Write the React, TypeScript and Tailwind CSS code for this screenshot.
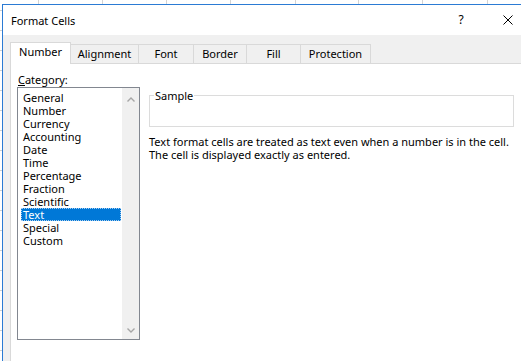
import React from "react";

const items = [
  "General",
  "Number",
  "Currency",
  "Accounting",
  "Date",
  "Time",
  "Percentage",
  "Fraction",
  "Scientific",
  "Text",
  "Special",
  "Custom",
];

const tabs = [
  { label: "Number", w: "w-[61px]", active: true },
  { label: "Alignment", w: "w-[69px]", active: false },
  { label: "Font", w: "w-[56px]", active: false },
  { label: "Border", w: "w-[54px]", active: false },
  { label: "Fill", w: "w-[55px]", active: false },
  { label: "Protection", w: "w-[71px]", active: false },
];

const gridCols = ["w-[39px]", "w-[64px]", "w-[64px]", "w-[64px]", "w-[65px]", "w-[63px]", "w-[64px]", "w-[65px]"];

export default function App() {
  return (
    <div
      className="w-[521px] h-[361px] overflow-hidden flex flex-col bg-white text-black text-[11px]"
      style={{ fontFamily: '"Noto Sans", "DejaVu Sans", sans-serif' }}
    >
      {/* spreadsheet grid peeking above */}
      <div className="h-[4px] flex shrink-0">
        {gridCols.map((c, i) => (
          <div key={i} className={`${c} h-full border-r border-[#d4d4d4] shrink-0`} />
        ))}
      </div>
      <div className="flex-1 flex min-h-0">
        <div className="w-[2px] shrink-0 bg-[repeating-linear-gradient(to_bottom,#ffffff_0px,#ffffff_6px,#d0d0d0_6px,#d0d0d0_7px,#ffffff_7px,#ffffff_20px)]" />
        <div className="flex-1 flex flex-col border-l border-t border-[#2b7bd4] min-w-0">
          {/* title bar */}
          <div className="h-[30px] shrink-0 bg-white flex items-center">
            <span className="pl-[8px] text-[11px] leading-[15px]">Format Cells</span>
            <div className="ml-auto flex items-center h-full">
              <div className="w-[46px] h-full flex items-center justify-center text-[12px]">?</div>
              <div className="w-[37px] h-full flex items-center pl-[19px]">
                <svg width="10" height="10" viewBox="0 0 10 10">
                  <path d="M0.5 0.5 L9.5 9.5 M9.5 0.5 L0.5 9.5" stroke="#000" strokeWidth="1" fill="none" />
                </svg>
              </div>
            </div>
          </div>
          {/* body */}
          <div className="flex-1 bg-[#f0f0f0] flex flex-col pl-[7px] pt-[7px] min-h-0">
            <div className="h-[21px] flex items-end shrink-0">
              {tabs.map((t, i) =>
                t.active ? (
                  <div
                    key={t.label}
                    className={`${t.w} h-[22px] -mb-px relative z-10 bg-white border border-b-0 border-[#d9d9d9] flex items-center justify-center pb-[2px] shrink-0`}
                  >
                    {t.label}
                  </div>
                ) : (
                  <div
                    key={t.label}
                    className={`${t.w} h-[19px] ${i > 0 ? "-ml-px" : ""} border border-b-0 border-[#d9d9d9] bg-[#f0f0f0] flex items-center justify-center shrink-0`}
                  >
                    {t.label}
                  </div>
                )
              )}
            </div>
            <div className="flex-1 bg-white border-t border-l border-[#d9d9d9] flex pl-[6px] pt-[8px] min-h-0">
              {/* category column */}
              <div className="flex flex-col shrink-0">
                <div className="ml-[1px] leading-[15px] h-[15px]">
                  <span className="underline">C</span>ategory:
                </div>
                <div className="w-[123px] h-[253px] border border-[#828790] flex">
                  <div className="flex-1 flex flex-col pt-[3px] pl-[3px] pr-[1px]">
                    {items.map((it) =>
                      it === "Text" ? (
                        <div
                          key={it}
                          className="h-[13px] leading-[11px] pl-[1px] bg-[#0078d7] text-white border border-dotted border-[#a8cdf0] overflow-hidden"
                        >
                          {it}
                        </div>
                      ) : (
                        <div key={it} className="h-[13px] leading-[13px] pl-[2px]">
                          {it}
                        </div>
                      )
                    )}
                  </div>
                  <div className="w-[17px] bg-[#f0f0f0] flex flex-col justify-between">
                    <div className="h-[22px] flex items-center justify-center">
                      <svg width="8" height="5" viewBox="0 0 8 5">
                        <path d="M0.5 4.5 L4 1 L7.5 4.5" stroke="#a6a6a6" strokeWidth="1.4" fill="none" />
                      </svg>
                    </div>
                    <div className="h-[17px] flex items-center justify-center">
                      <svg width="8" height="5" viewBox="0 0 8 5">
                        <path d="M0.5 0.5 L4 4 L7.5 0.5" stroke="#a6a6a6" strokeWidth="1.4" fill="none" />
                      </svg>
                    </div>
                  </div>
                </div>
              </div>
              {/* right column */}
              <div className="ml-[9px] flex flex-col pt-[17px]">
                <fieldset className="w-[365px] h-[38px] border border-[#dcdcdc] pl-[4px]">
                  <legend className="px-[1px] leading-[13px]">Sample</legend>
                </fieldset>
                <div className="mt-[8px] leading-[13px]">
                  <div>Text format cells are treated as text even when a number is in the cell.</div>
                  <div>The cell is displayed exactly as entered.</div>
                </div>
              </div>
            </div>
          </div>
        </div>
      </div>
    </div>
  );
}
